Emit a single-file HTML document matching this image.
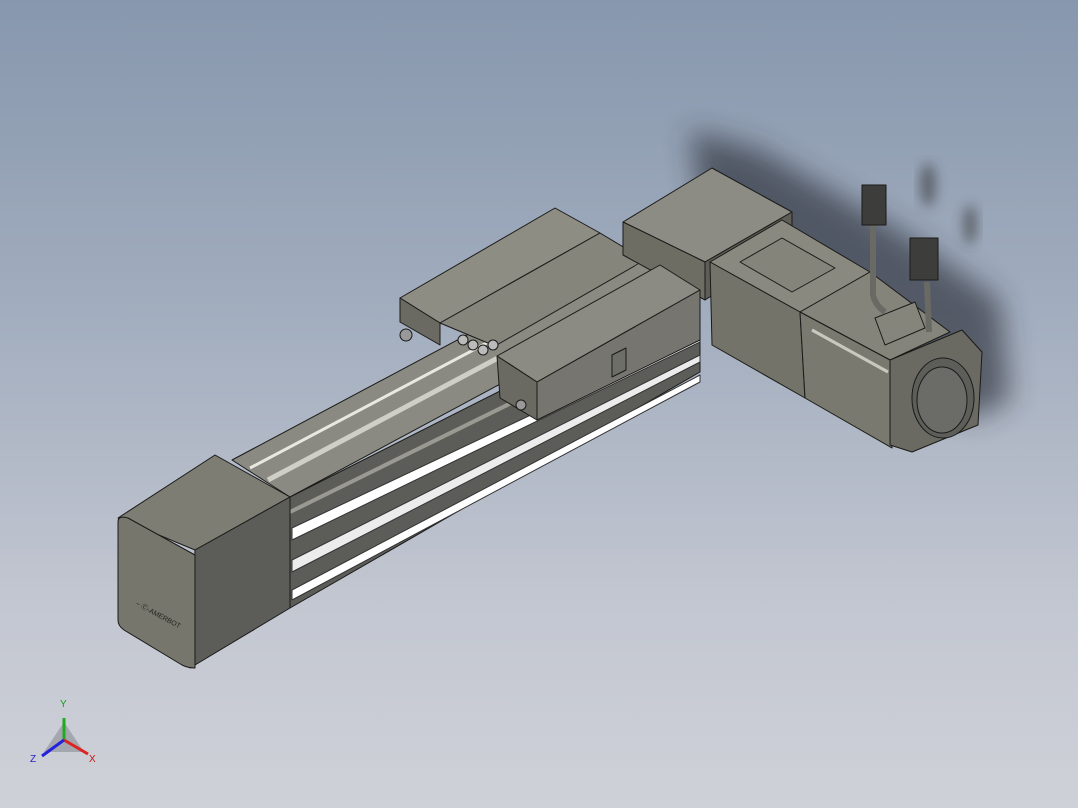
<!DOCTYPE html>
<html><head><style>
html,body{margin:0;padding:0;width:1078px;height:808px;overflow:hidden}
body{background:linear-gradient(180deg,#8797ad 0%,#a3aebf 40%,#c3c7d1 75%,#cfd1d8 100%);font-family:"Liberation Sans",sans-serif}
svg{position:absolute;left:0;top:0}
</style></head><body>
<svg width="1078" height="808" viewBox="0 0 1078 808">
<defs>
<filter id="b" x="-30%" y="-30%" width="160%" height="160%"><feGaussianBlur stdDeviation="14"/></filter>
<filter id="b2"><feGaussianBlur stdDeviation="6"/></filter>
</defs>
<g opacity="0.65" filter="url(#b)">
<polygon points="690,130 760,150 900,230 1000,300 1010,400 970,420 860,330 700,200" fill="#2b2f38"/>
</g>
<g opacity="0.55" filter="url(#b2)">
<ellipse cx="928" cy="185" rx="8" ry="22" fill="#333"/>
<ellipse cx="970" cy="225" rx="7" ry="20" fill="#333"/>
</g>
<g stroke="#1a1a18" stroke-width="1" stroke-linejoin="round">
<!-- rail top -->
<polygon points="232,460 630,248 690,282 290,497" fill="#8a8a82"/>
<line x1="250" y1="468" x2="640" y2="262" stroke="#e8e8e0" stroke-width="3"/>
<line x1="268" y1="480" x2="660" y2="272" stroke="#cfcfc6" stroke-width="5"/>
<!-- rail side -->
<polygon points="290,497 700,290 700,372 290,608" fill="#5c5c58"/>
<polygon points="292,528 700,335 700,342 292,540" fill="#ffffff" stroke="#333"/>
<polygon points="292,560 700,355 700,362 292,572" fill="#ececec" stroke="#333"/>
<polygon points="292,590 700,375 700,382 292,600" fill="#ffffff" stroke="#333"/>
<line x1="290" y1="512" x2="700" y2="310" stroke="#9a9a92" stroke-width="4"/>
<!-- rear upper plate -->
<polygon points="400,298 555,208 600,233 440,323" fill="#8d8d84"/>
<polygon points="400,298 440,323 440,345 400,322" fill="#6a6a62"/>
<polygon points="440,323 600,233 645,260 495,346" fill="#85857c"/>
<!-- motor coupling housing -->
<polygon points="623,222 712,168 792,212 705,262" fill="#8c8c84"/>
<polygon points="623,222 705,262 705,300 623,255" fill="#6e6d64"/>
<polygon points="705,262 792,212 792,245 705,300" fill="#5e5d57"/>
<!-- carriage -->
<polygon points="497,356 660,265 700,290 537,382" fill="#8b8b83"/>
<polygon points="497,356 537,382 537,420 500,398" fill="#6b6a62"/>
<polygon points="537,382 700,290 700,340 537,420" fill="#767570"/>
<polygon points="612,355 626,348 626,370 612,377" fill="#6e6e68"/>
<circle cx="463" cy="340" r="5" fill="#bbb"/><circle cx="473" cy="345" r="5" fill="#bbb"/><circle cx="483" cy="350" r="5" fill="#bbb"/><circle cx="493" cy="345" r="5" fill="#bbb"/>
<circle cx="406" cy="335" r="6" fill="#999"/>
<circle cx="521" cy="405" r="5" fill="#999"/>
<!-- motor square block -->
<polygon points="710,262 782,220 870,272 800,312" fill="#8a897f"/>
<polygon points="740,262 782,238 835,268 792,292" fill="#85847b"/>
<polygon points="710,262 800,312 805,398 712,345" fill="#74736a"/>
<!-- motor body -->
<polygon points="800,312 870,272 950,332 890,360" fill="#85847b"/>
<polygon points="800,312 890,360 892,448 805,398" fill="#7a796f"/>
<line x1="812" y1="330" x2="888" y2="372" stroke="#c8c8bf" stroke-width="3"/>
<!-- flange -->
<polygon points="890,360 962,330 982,352 978,425 912,452 890,445" fill="#6a6a62"/>
<ellipse cx="943" cy="398" rx="31" ry="40" fill="#5d5d5a"/>
<ellipse cx="942" cy="400" rx="25" ry="33" fill="#6b6b68"/>
<polygon points="875,318 915,302 925,328 885,345" fill="#86857c"/>
<!-- cables -->
<path d="M873 225 L873 295 Q875 305 885 312" fill="none" stroke="#6a6a64" stroke-width="6"/>
<path d="M927 282 L929 332" fill="none" stroke="#6a6a64" stroke-width="6"/>
<rect x="862" y="185" width="24" height="40" fill="#3d3d3b"/>
<rect x="910" y="238" width="28" height="42" fill="#3d3d3b"/>
<!-- end cap -->
<polygon points="118,518 215,455 290,497 195,550" fill="#7e7d74"/>
<polygon points="195,550 290,497 290,608 190,668" fill="#5c5c59"/>
<path d="M118,522 Q118,515 128,518 L195,555 L195,668 Q188,668 182,665 L124,630 Q118,626 118,620 Z" fill="#77766c"/>
</g>
<text x="135" y="605" font-size="7" fill="#222" transform="rotate(28 135 605)">~ Ⓒ-AMERBOT</text>
<g>
<polygon points="44,752 64,722 84,752" fill="#9a9ca6" opacity="0.8"/>
<line x1="64" y1="740" x2="64" y2="718" stroke="#1faa1f" stroke-width="3"/>
<line x1="64" y1="740" x2="88" y2="754" stroke="#d22" stroke-width="3"/>
<line x1="64" y1="740" x2="42" y2="756" stroke="#22d" stroke-width="3"/>
<text x="60" y="707" font-size="10" fill="#1a9a1a">Y</text>
<text x="89" y="762" font-size="10" fill="#c11">X</text>
<text x="30" y="762" font-size="10" fill="#22c">Z</text>
</g>
</svg>
</body></html>
